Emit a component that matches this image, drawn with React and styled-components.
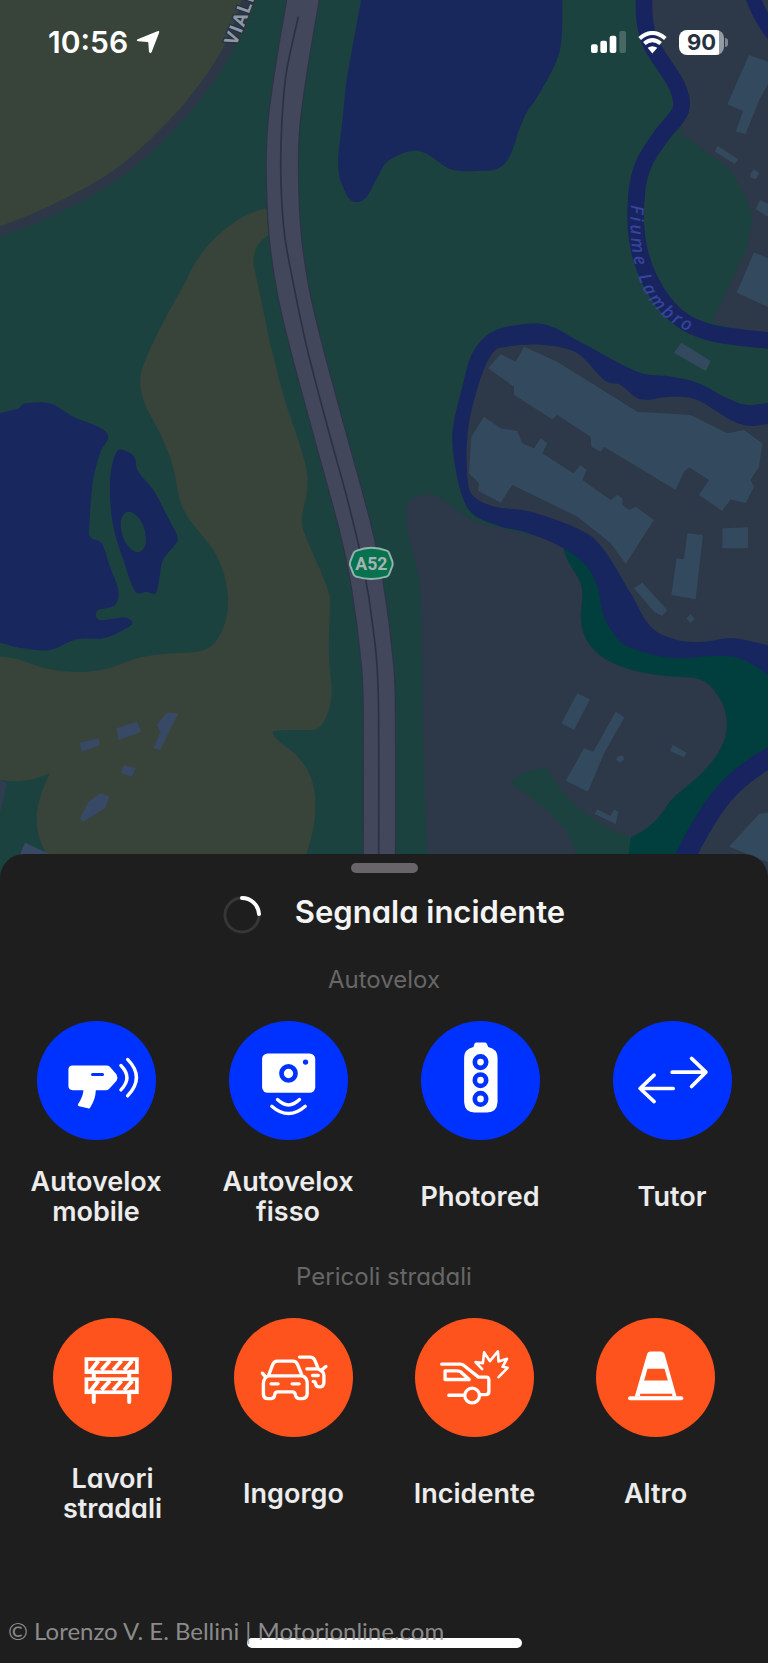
import React from "react";
import styled, { createGlobalStyle } from "styled-components";

const GlobalStyle = createGlobalStyle`
  *, *::before, *::after { box-sizing: border-box; }
  body {
    margin: 0;
    background: #1e1e1e;
    color: #ececec;
    font-family: Inter, "Liberation Sans", sans-serif;
  }
`;

const Page = styled.main`
  display: flex;
  flex-direction: column;
  min-height: 100vh;
`;

const Hero = styled.section`
  position: relative;
`;

const MapDrawing = styled.svg`
  display: block;
  width: 100%;
  height: auto;
`;

const StatusBar = styled.header`
  position: absolute;
  top: 0;
  left: 0;
  right: 0;
  display: flex;
  align-items: center;
  justify-content: space-between;
  padding: 24px 40px 0 48px;
`;

const StatusGroup = styled.div`
  display: flex;
  align-items: center;
  gap: ${(p) => p.$gap}px;
`;

const Clock = styled.time`
  color: #fff;
  font-size: 30px;
  font-weight: 600;
  line-height: 36px;
`;

const BatteryBody = styled.span`
  display: block;
  width: 45px;
  border-radius: 8px;
  background: linear-gradient(90deg, #fff 40px, #929aa2 40px);
  color: #27323f;
  font-size: 22px;
  font-weight: 700;
  line-height: 25px;
  text-align: center;
`;

const BatteryCap = styled.span`
  width: 3px;
  height: 9px;
  border-radius: 0 4px 4px 0;
  background: #7d858e;
`;

const Sheet = styled.section`
  position: relative;
  flex: 1;
  display: flex;
  flex-direction: column;
  margin-top: -24px;
  padding-top: 9px;
  border-radius: 24px 24px 0 0;
  background: #1e1e1e;
`;

const Handle = styled.div`
  align-self: center;
  width: 67px;
  height: 10px;
  border-radius: 5px;
  background: #676567;
`;

const TitleRow = styled.div`
  display: flex;
  justify-content: center;
  align-items: flex-start;
  gap: 34px;
  margin: 23px 0 30px;
  padding-left: 20px;
`;

const Title = styled.h1`
  margin: 0;
  color: #f4f4f4;
  font-size: 31px;
  font-weight: 600;
  line-height: 32px;
  font-feature-settings: "cv11";
`;

const Group = styled.section`
  margin-bottom: 34px;
`;

const GroupTitle = styled.h2`
  margin: 0 0 25px;
  color: #676767;
  font-size: 24px;
  font-weight: 400;
  line-height: 32px;
  text-align: center;
  font-feature-settings: "cv11";
`;

const Tiles = styled.div`
  display: grid;
  grid-template-columns: repeat(4, 1fr);
  padding: 0 ${(p) => p.$inset}px;
`;

const Tile = styled.button`
  display: flex;
  flex-direction: column;
  align-items: center;
  gap: 27px;
  padding: 0;
  border: 0;
  background: none;
  color: inherit;
  font: inherit;
  cursor: pointer;
`;

const Disc = styled.span`
  display: block;
  width: 119px;
  height: 119px;
  border-radius: 50%;
  background: ${(p) => p.$color};

  svg {
    display: block;
    width: 100%;
    height: 100%;
  }
`;

const TileLabel = styled.span`
  display: flex;
  align-items: center;
  min-height: 60px;
  max-width: 140px;
  font-size: 27px;
  font-weight: 600;
  line-height: 30px;
  font-feature-settings: "cv11";
`;

const Footer = styled.footer`
  position: relative;
  display: flex;
  justify-content: center;
  margin-top: auto;
  padding: 24px 0 15px;
`;

const HomeIndicator = styled.div`
  width: 275px;
  height: 10px;
  border-radius: 5px;
  background: #fff;
`;

const Credit = styled.small`
  position: absolute;
  left: 8px;
  bottom: 16px;
  color: rgba(160, 160, 160, 0.85);
  font-family: Lato, "Open Sans", sans-serif;
  font-size: 24px;
  line-height: 32px;
  white-space: nowrap;
`;

/* Turns a list of points into a rounded path through them. */
function smooth(points, closed) {
  const n = points.length;
  const at = (i) => (closed ? points[(i + n) % n] : points[Math.max(0, Math.min(n - 1, i))]);
  let d = `M${points[0].join(" ")}`;
  const last = closed ? n : n - 1;
  for (let i = 0; i < last; i++) {
    const [a, b, c, e] = [at(i - 1), at(i), at(i + 1), at(i + 2)];
    d += `C${b[0] + (c[0] - a[0]) / 6} ${b[1] + (c[1] - a[1]) / 6} ${c[0] - (e[0] - b[0]) / 6} ${
      c[1] - (e[1] - b[1]) / 6
    } ${c[0]} ${c[1]}`;
  }
  return closed ? d + "Z" : d;
}

const vialeRoad = [[-20, 702], [0, 695], [110, 652], [215, 602], [320, 543], [400, 484], [475, 415], [550, 337], [600, 275], [645, 213], [690, 135], [725, 50], [745, -20]];
const highway = [[912, -20], [909, 0], [875, 200], [852, 370], [847, 510], [855, 700], [880, 875], [920, 1045], [986, 1290], [1065, 1580], [1102, 1755], [1132, 1990], [1138, 2150], [1138, 2640]];
const highwayMiddle = [[895, 50], [862, 200], [850, 300], [843, 430], [843, 550], [852, 690], [870, 800], [920, 1040], [985, 1290], [1040, 1490], [1090, 1700], [1120, 1890], [1135, 2090], [1136, 2640]];
const oliveField = "M800 625C700 645 600 740 560 840C520 910 430 1070 421 1130C418 1200 450 1240 475 1290C520 1380 525 1420 535 1480C545 1550 600 1590 640 1650C680 1710 692 1800 680 1850C665 1910 640 1950 590 1955C540 1962 460 1955 380 1985C320 2010 260 2025 160 2010C100 2000 60 1970 0 1970V2340C60 2350 100 2340 150 2320C110 2400 100 2460 120 2520L170 2640H890C930 2540 950 2480 945 2390C940 2310 890 2260 850 2235C800 2195 815 2192 850 2190H940C980 2185 1000 2100 994 2050C980 1950 990 1880 990 1790C970 1720 930 1650 910 1590C895 1540 925 1500 922 1450C925 1400 900 1340 885 1290C840 1170 820 1060 810 1030L760 790C760 740 780 725 805 705Z";
const topLake = "M1085 -10C1060 130 1042 220 1036 270C1030 330 1028 360 1020 420C1010 480 1015 520 1020 540C1040 590 1050 607 1070 607C1100 605 1110 575 1125 545L1152 495C1180 465 1230 450 1255 452C1300 460 1330 512 1375 512C1400 516 1420 512 1465 512C1530 510 1540 440 1555 395C1570 360 1580 330 1600 310C1650 230 1670 190 1680 150C1690 100 1686 40 1687 -10Z";
const leftLake = [[-30, 1250], [0, 1240], [55, 1225], [75, 1210], [150, 1210], [220, 1250], [300, 1283], [325, 1312], [300, 1360], [278, 1450], [269, 1560], [270, 1610], [305, 1630], [330, 1700], [355, 1770], [345, 1815], [292, 1832], [300, 1860], [375, 1853], [397, 1870], [370, 1890], [310, 1915], [230, 1918], [150, 1950], [70, 1945], [0, 1928], [-30, 1920]];
const pond = [[350, 1355], [385, 1357], [405, 1375], [415, 1415], [460, 1470], [500, 1545], [533, 1612], [520, 1640], [487, 1685], [470, 1775], [440, 1775], [405, 1773], [370, 1680], [338, 1570], [330, 1440]];
const lambro = [[780, -30], [782, 60], [800, 130], [840, 195], [880, 260], [890, 330], [830, 410], [780, 490], [758, 580], [760, 720], [800, 845], [880, 950], [990, 1000], [1180, 1024]];
const northEastLand = "M790 -20H1200V1030L985 965L1040 850L1090 740L1105 650L1085 590L1040 510L960 450L890 400L900 280L820 150Z";
const loopOuter = [[1190, 1200], [1152, 1208], [1090, 1215], [1030, 1195], [940, 1148], [850, 1128], [760, 1115], [600, 1032], [490, 975], [400, 975], [320, 998], [265, 1060], [235, 1160], [206, 1290], [212, 1390], [235, 1490], [270, 1545], [350, 1580], [420, 1595], [520, 1635], [600, 1690], [640, 1760], [660, 1850], [710, 1925], [790, 1960], [880, 1975], [1000, 1968], [1080, 1980], [1190, 2050]];
const loopInner = [[1190, 1270], [1152, 1272], [1100, 1278], [1040, 1260], [940, 1200], [860, 1190], [770, 1198], [710, 1155], [660, 1140], [580, 1060], [480, 1035], [370, 1040], [325, 1060], [285, 1150], [252, 1290], [250, 1430], [270, 1490], [340, 1522], [440, 1535], [590, 1590], [660, 1650], [740, 1780], [800, 1880], [880, 1920], [960, 1925], [1050, 1915], [1190, 1945]];
const plain = "M135 1350C110 900 118 700 108 450C90 380 65 300 65 240C75 200 110 188 150 195C230 240 250 280 330 290L540 340L1060 500V1350Z";
const woodland = "M538 355C555 420 595 440 595 490C595 530 585 550 595 600C610 640 630 675 700 705C770 735 860 740 920 742C980 750 1000 790 1020 830C1035 890 1035 930 980 1000C930 1060 880 1085 850 1125C820 1170 800 1195 740 1222L720 1350H900L1200 1000V650L700 500L600 340Z";
const eastBuildings = [
  "1095,165 1152,185 1160,240 1128,295 1085,402 1055,395 1077,333 1030,313",
  "1000,437 1063,478 1052,492 993,455",
  "1100,518 1110,508 1126,520 1116,538 1098,532",
  "1128,600 1160,615 1160,655 1115,628",
  "1110,757 1160,778 1160,925 1058,878",
  "892,1028 980,1083 965,1113 870,1058",
  "420,1040 520,1085 760,1235 920,1245 1030,1300 1080,1290 1135,1330 1125,1400 1100,1440 1110,1460 1085,1510 1040,1498 1015,1533 945,1485 975,1440 915,1402 900,1415 875,1470 660,1340 650,1355 622,1340 620,1310 520,1245 505,1258 390,1185 390,1160 312,1105 350,1062 395,1085",
  "300,1250 350,1285 400,1293 415,1330 450,1345 470,1315 490,1330 475,1360 568,1420 590,1395 608,1410 595,1440 680,1500 700,1485 715,1495 715,1515 735,1530 755,1520 810,1560 725,1692 680,1630 580,1550 385,1455 350,1508 282,1472 285,1450 255,1420 262,1310",
];
const southBuildings = [
  "910,310 957,315 935,508 862,495 878,385 900,388",
  "1015,295 1092,292 1092,355 1015,355",
  "750,475 775,458 850,540 835,558 810,545",
  "907,565 920,552 932,566 920,580",
  "580,790 618,808 570,900 532,880",
  "695,845 722,862 660,970 612,1085 545,1052 600,955 628,965",
  "700,980 714,975 722,988 708,998 697,990",
  "866,944 908,968 900,982 858,963",
  "640,1138 680,1158 690,1138 703,1145 695,1182 632,1152",
  "1125,1152 1160,1145 1160,1300 1035,1250",
];
const westBuildings = [
  "350,895 410,875 425,905 355,930",
  "240,938 295,925 300,945 245,965",
  "500,848 535,850 480,960 460,955 482,905 470,885",
  "372,1005 408,1015 395,1040 362,1028",
  "265,1115 300,1090 328,1100 315,1135 250,1175 240,1165",
  "75,1238 155,1275 60,1275",
];

function Polygons({ shapes, fill }) {
  return shapes.map((points) => <polygon key={points} points={points} fill={fill} />);
}

function RouteMap() {
  return (
    <MapDrawing viewBox="0 0 2304 2634" role="img" aria-label="Mappa">
      <rect width="2304" height="2634" fill="#1c4240" />
      <path d={`${smooth(vialeRoad)}L-20 -20Z`} fill="#38443a" />
      <path d={smooth(vialeRoad)} fill="none" stroke="#2e3747" strokeWidth="30" />
      <path d={oliveField} fill="#38443a" />
      <path d={topLake} fill="#18285d" />
      <path d={smooth(leftLake, true)} fill="#18285e" />
      <path d={smooth(pond, true)} fill="#18265e" />
      <ellipse cx="400" cy="1596" rx="34" ry="63" transform="rotate(-18 400 1596)" fill="#1c4240" />
      <g transform="translate(0 1290)">
        <Polygons shapes={westBuildings} fill="#384965" />
        <path d="M0 1050L20 1060L0 1150Z" fill="#303d50" />
      </g>
      <g transform="translate(1152 1290)">
        <path d={plain} fill="#2d3848" />
        <path d={woodland} fill="#003f3d" />
        <path d="M385 1050Q430 1015 490 1015Q510 1060 560 1110Q640 1190 740 1222L725 1350H600Q580 1270 545 1200Q490 1130 385 1065Z" fill="#1c4240" />
      </g>
      <g transform="translate(1152 0)">
        <path d={northEastLand} fill="#2d3848" />
        <path d={smooth(lambro)} fill="none" stroke="#18245f" strokeWidth="50" />
        <path d="M1103 -20Q1125 50 1170 105" fill="none" stroke="#18245f" strokeWidth="44" />
        <path d={`${smooth(loopOuter)}Z`} fill="#18265f" />
        <path d={`${smooth(loopInner)}Z`} fill="#2d3848" />
        <Polygons shapes={eastBuildings} fill="#33495e" />
      </g>
      <g transform="translate(1152 1290)">
        <path d="M1170 975Q1040 1040 980 1140Q930 1220 880 1350H1170Z" fill="#2d3848" />
        <path d="M1180 972Q1060 1030 990 1130Q930 1220 880 1330" fill="none" stroke="#18245f" strokeWidth="60" />
        <Polygons shapes={southBuildings} fill="#33495e" />
      </g>
      <path d={smooth(highway)} fill="none" stroke="#2d3347" strokeWidth="100" />
      <path d={smooth(highway)} fill="none" stroke="#42475b" strokeWidth="93" />
      <path d={smooth(highwayMiddle)} fill="none" stroke="#2b3045" strokeWidth="5" />

      <path d="M1070 1652Q1114 1634 1160 1652Q1166 1654 1168 1661L1177 1684Q1179 1691 1177 1698L1168 1721Q1166 1728 1159 1730Q1114 1744 1069 1730Q1062 1728 1060 1721L1051 1698Q1049 1691 1051 1684L1060 1661Q1062 1655 1070 1652Z" fill="#087150" stroke="#8fb5ab" strokeWidth="6" />
      <text x="1114" y="1709" textAnchor="middle" fontFamily="Roboto, sans-serif" fontSize="53" fontWeight="700" fill="#a4b5b0">A52</text>

      <path id="viale-label" d="M708 140Q758 20 808 -140" fill="none" />
      <text fontFamily="Roboto, sans-serif" fontSize="57" fontWeight="700" letterSpacing="4" fill="#8d97a5" stroke="#26313f" strokeWidth="8" paintOrder="stroke">
        <textPath href="#viale-label">VIALE</textPath>
      </text>
      <path id="fiume-label" d="M1893 614C1886 740 1904 828 1944 895C1984 955 2030 990 2180 1035" fill="none" />
      <text fontFamily='"Noto Sans", sans-serif' fontSize="54" fontStyle="italic" fontWeight="500" letterSpacing="9" fill="#36459a">
        <textPath href="#fiume-label">Fiume Lambro</textPath>
      </text>
    </MapDrawing>
  );
}

const LocationIcon = () => (
  <svg width="24" height="24" viewBox="0 0 72 72" aria-hidden="true">
    <path d="M64 4Q72 1 69 9L47 66Q43 73 39 66L37 38Q37 36 34 36L6 34Q-1 31 5 28Z" fill="#fff" />
  </svg>
);

const SignalIcon = () => (
  <svg width="35" height="22" viewBox="0 0 105 66" role="img" aria-label="Segnale">
    <rect x="0" y="40" width="20" height="26" rx="6" fill="#fff" />
    <rect x="28" y="29" width="20" height="37" rx="6" fill="#fff" />
    <rect x="56" y="14" width="20" height="52" rx="6" fill="#fff" />
    <rect x="85" y="0" width="20" height="66" rx="6" fill="#476865" />
  </svg>
);

const WifiIcon = () => (
  <svg width="29" height="23" viewBox="0 0 87 68" role="img" aria-label="Wi-Fi">
    <path d="M5 22Q43 -11 82 22M19 37Q43 17 68 37" fill="none" stroke="#fff" strokeWidth="12" />
    <path d="M29 50Q43 40 58 50L43 67Z" fill="#fff" />
  </svg>
);

const Spinner = () => (
  <svg width="38" height="38" viewBox="0 0 38 38" role="img" aria-label="Caricamento">
    <circle cx="19" cy="19" r="17" fill="none" stroke="#363636" strokeWidth="3" />
    <path d="M19 2A17 17 0 0 1 36 18" fill="none" stroke="#fff" strokeWidth="4" strokeLinecap="round" />
  </svg>
);

/* A white line drawing; each icon has its own origin on the drawing sheet. */
function Icon({ origin, children }) {
  return (
    <svg viewBox={`${origin} 356 356`} fill="none" stroke="#fff" strokeWidth="10" strokeLinecap="round" strokeLinejoin="round" aria-hidden="true">
      {children}
    </svg>
  );
}

const BLUE = "#0032ff";
const ORANGE = "#ff531e";

const SpeedGun = () => (
  <Icon origin="50 62">
    <path d="M157 195H258Q264 195 268 199L288 222Q293 231 288 241L267 264Q263 269 257 269H226Q225 296 210 319Q208 325 202 323L176 317Q170 315 173 310Q187 290 189 269H157Q144 269 144 256V208Q144 195 157 195Z" fill="#fff" stroke="none" />
    <path d="M216 222H246" stroke={BLUE} strokeWidth="9" />
    <path d="M301 195Q337 231 301 268M321 177Q374 231 321 286" />
  </Icon>
);

const FixedCamera = () => (
  <Icon origin="625 62">
    <rect x="724" y="159" width="159" height="118" rx="17" fill="#fff" stroke="none" />
    <circle cx="803" cy="219" r="21" stroke={BLUE} strokeWidth="14" />
    <circle cx="854" cy="185" r="8" fill={BLUE} stroke="none" />
    <path d="M770 297Q803 329 836 297M753 317Q803 361 853 317" />
  </Icon>
);

const RedLightCamera = () => (
  <Icon origin="62 62">
    <path d="M228 126H253Q257 126 259 130L263 140Q291 146 291 172V305Q289 335 260 336H222Q193 335 191 305V172Q191 146 219 140L222 130Q224 126 228 126Z" fill="#fff" stroke="none" />
    {[185, 239, 295].map((y) => (
      <circle key={y} cx="240" cy={y} r="17" stroke={BLUE} strokeWidth="14" />
    ))}
  </Icon>
);

const Arrows = () => (
  <Icon origin="638 62">
    <path d="M815 215H915M873 174L916 215L873 258M818 264H720M761 224L719 264L761 303" strokeWidth="11" />
  </Icon>
);

const Barrier = () => (
  <Icon origin="100 173">
    <path d="M222 400V424M328 400V424M222 340V354M328 340V354" strokeWidth="12" />
    {[296, 356].map((y) => (
      <React.Fragment key={y}>
        <rect x="200" y={y} width="151" height="39" strokeWidth="11" strokeLinejoin="miter" />
        <path d={`M214 ${y + 33}L236 ${y + 5}M245 ${y + 33}L270 ${y + 5}M280 ${y + 33}L305 ${y + 5}M313 ${y + 33}L337 ${y + 5}`} strokeWidth="12" strokeLinecap="butt" />
        <path d={`M204 ${y + 33}H219M329 ${y + 35}H347`} strokeWidth="6" />
      </React.Fragment>
    ))}
  </Icon>
);

const Traffic = () => (
  <Icon origin="643 173">
    <path d="M746 346L759 312Q763 302 773 302H819Q829 302 833 312L847 346H746Q732 352 731 368V402Q732 414 744 414H754Q764 413 765 402Q766 394 774 394H819Q826 395 827 404Q829 414 839 414H848Q861 413 862 400V365Q860 350 847 346M728 338L738 350" />
    <path d="M754 370H775M817 370H838" />
    <path d="M839 290H870Q881 290 885 300L895 325H861M895 325L903 330Q912 335 912 346V366Q911 379 899 379Q888 379 887 369Q886 363 880 363M906 328L918 318M878 345H895" />
  </Icon>
);

const Crash = () => (
  <Icon origin="45 173">
    <path d="M125 311H181Q187 311 191 315L235 350H258Q266 350 266 359V393Q266 402 257 402H242M146 404H190" />
    <path d="M135 331H170Q178 331 183 335L207 357H135Z" />
    <circle cx="216" cy="405" r="22" />
    <path d="M246 326L226 305L248 308L252 276L269 302L293 273L295 303L320 295L307 319L322 322L295 350" strokeWidth="8" />
  </Icon>
);

const Cone = () => (
  <Icon origin="588 173">
    <path d="M750 273H783Q790 273 793 281L829 408H704L741 281Q743 273 750 273Z" fill="#fff" stroke="none" />
    <path d="M742 325H793L803 360H732Z" fill={ORANGE} stroke="none" />
    <path d="M720 403H816" stroke={ORANGE} strokeWidth="7" strokeLinecap="butt" />
    <path d="M690 413H843" strokeWidth="12" />
  </Icon>
);

const groups = [
  {
    title: "Autovelox",
    color: BLUE,
    inset: 0,
    items: [
      ["Autovelox mobile", SpeedGun],
      ["Autovelox fisso", FixedCamera],
      ["Photored", RedLightCamera],
      ["Tutor", Arrows],
    ],
  },
  {
    title: "Pericoli stradali",
    color: ORANGE,
    inset: 22,
    items: [
      ["Lavori stradali", Barrier],
      ["Ingorgo", Traffic],
      ["Incidente", Crash],
      ["Altro", Cone],
    ],
  },
];

export default function App() {
  return (
    <Page>
      <GlobalStyle />
      <Hero>
        <RouteMap />
        <StatusBar>
          <StatusGroup $gap={8}>
            <Clock>10:56</Clock>
            <LocationIcon />
          </StatusGroup>
          <StatusGroup $gap={12}>
            <SignalIcon />
            <WifiIcon />
            <StatusGroup $gap={1}>
              <BatteryBody>90</BatteryBody>
              <BatteryCap />
            </StatusGroup>
          </StatusGroup>
        </StatusBar>
      </Hero>
      <Sheet>
        <Handle />
        <TitleRow>
          <Spinner />
          <Title>Segnala incidente</Title>
        </TitleRow>
        {groups.map((group) => (
          <Group key={group.title}>
            <GroupTitle>{group.title}</GroupTitle>
            <Tiles $inset={group.inset}>
              {group.items.map(([label, Drawing]) => (
                <Tile key={label} type="button">
                  <Disc $color={group.color}>
                    <Drawing />
                  </Disc>
                  <TileLabel>{label}</TileLabel>
                </Tile>
              ))}
            </Tiles>
          </Group>
        ))}
        <Footer>
          <HomeIndicator />
          <Credit>© Lorenzo V. E. Bellini | Motorionline.com</Credit>
        </Footer>
      </Sheet>
    </Page>
  );
}
